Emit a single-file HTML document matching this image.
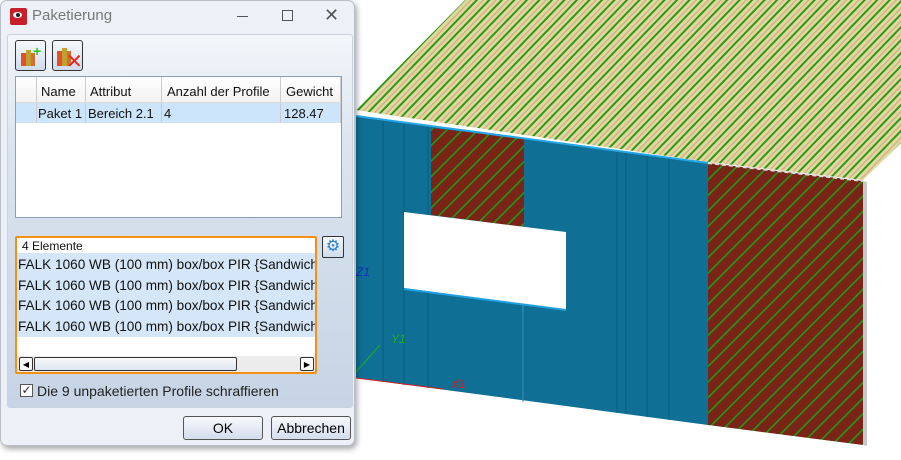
<!DOCTYPE html>
<html><head><meta charset="utf-8"><style>
body{margin:0;width:901px;height:460px;overflow:hidden;background:#fff;font-family:"Liberation Sans",sans-serif;position:relative}
.a{position:absolute}
.dlg{left:0;top:0;width:355px;height:446px;background:#edf1f7;border:1px solid #b9bfc8;border-radius:7px;box-shadow:2px 3px 6px rgba(0,0,0,.35);box-sizing:border-box;overflow:hidden}
.panel{left:6px;top:33px;width:344px;height:372px;border:1px solid #c9d3e0;border-radius:3px;background:linear-gradient(#f3f6fa 0,#dbe4ef 30%,#c7d4e5 100%)}
.tb{width:31px;height:31px;border:1px solid #333;border-radius:3px;background:linear-gradient(#f6f8fb,#cfdceb);box-sizing:border-box}
.t{font-size:13px;color:#111;white-space:nowrap}
.r{font-size:13.6px;color:#111;white-space:nowrap}
.btn{height:24px;border:1px solid #555;border-radius:3px;background:linear-gradient(#f7f9fc,#d3dded);box-sizing:border-box;font-size:14px;text-align:center;line-height:22px}
</style></head><body>
<svg class="a" style="left:0;top:0" width="901" height="460">
<defs>
<pattern id="rh" patternUnits="userSpaceOnUse" width="9" height="9" patternTransform="rotate(44)">
<rect width="9" height="9" fill="#e5d5a0"/><rect x="0" width="2" height="9" fill="#2a9a1a"/><rect x="5" width="1.5" height="9" fill="#c9b982"/></pattern>
<pattern id="wh" patternUnits="userSpaceOnUse" width="11" height="11" patternTransform="rotate(45)">
<rect width="11" height="11" fill="#7a2418"/><rect x="0" width="1.6" height="11" fill="#1f9a18"/></pattern>
</defs>
<polygon points="356,110 465,0 901,0 901,143 863,180 708,162" fill="url(#rh)"/>
<polygon points="356,116 708,163 708,425 356,378" fill="#0f6f95"/>
<g stroke="#0a5c80" stroke-width="1"><line x1="383" y1="120" x2="383" y2="382"/><line x1="404" y1="122" x2="404" y2="385"/><line x1="428" y1="126" x2="428" y2="388"/><line x1="617" y1="151" x2="617" y2="413"/><line x1="626" y1="152" x2="626" y2="414"/><line x1="647" y1="155" x2="647" y2="417"/><line x1="669" y1="158" x2="669" y2="420"/><line x1="523" y1="232" x2="523" y2="402" stroke="#3a90b8"/></g>
<polygon points="431,128 524,138 524,227 431,215" fill="url(#wh)"/>
<polygon points="708,163 863,181 863,445 708,425" fill="url(#wh)"/>
<polygon points="863,181 867,182 867,446 863,445" fill="#c8c8c8"/>
<polygon points="404,212 566,232 566,310 404,288" fill="#fff"/>
<line x1="404" y1="289" x2="566" y2="310" stroke="#1fa0e0" stroke-width="2"/>
<line x1="356" y1="116" x2="708" y2="163" stroke="#25a5e5" stroke-width="2"/>
<line x1="708" y1="163" x2="863" y2="181" stroke="#ddd" stroke-width="2" stroke-dasharray="4,3"/>
<line x1="356" y1="378" x2="443" y2="389" stroke="#d02020"/>
<line x1="356" y1="372" x2="380" y2="345" stroke="#20b020"/>
<text x="451" y="388" fill="#d02020" font-size="12" font-style="italic" font-family="Liberation Sans">X1</text>
<text x="391" y="343" fill="#20b020" font-size="12" font-style="italic" font-family="Liberation Sans">Y1</text>
<text x="356" y="276" fill="#1030c0" font-size="12" font-style="italic" font-family="Liberation Sans">Z1</text>
</svg>
<div class="a dlg">
<div class="a" style="left:9px;top:7px;width:17px;height:17px;background:#c8202a;border-radius:2px"><div class="a" style="left:3px;top:4px;width:9px;height:6px;background:#fff;border-radius:50%"></div><div class="a" style="left:6px;top:5px;width:4px;height:4px;background:#222;border-radius:50%"></div></div>
<div class="a" style="left:31px;top:6px;font-size:15px;color:#777">Paketierung</div>
<div class="a" style="left:236px;top:15px;width:11px;height:1px;background:#555"></div>
<div class="a" style="left:281px;top:9px;width:9px;height:9px;border:1px solid #555"></div>
<div class="a" style="left:323px;top:4px;font-size:18px;color:#555">✕</div>
<div class="a panel"></div>
<div class="a tb" style="left:14px;top:39px"><div class="a" style="left:5px;top:12px;width:5px;height:13px;background:#e0502a"></div><div class="a" style="left:10px;top:9px;width:5px;height:16px;background:#c0a030"></div><div class="a" style="left:15px;top:12px;width:4px;height:13px;background:#d07030"></div><div class="a" style="left:17px;top:2px;color:#2c2;font-weight:bold;font-size:14px">+</div></div>
<div class="a tb" style="left:51px;top:39px"><div class="a" style="left:4px;top:10px;width:5px;height:15px;background:#e0502a"></div><div class="a" style="left:9px;top:7px;width:5px;height:18px;background:#c0a030"></div><div class="a" style="left:14px;top:10px;width:4px;height:15px;background:#d07030"></div><div class="a" style="left:13px;top:8px;color:#e22;font-size:20px">✕</div></div>
<div class="a" style="left:14px;top:75px;width:327px;height:142px;background:#fff;border:1px solid #8a9fba;box-sizing:border-box">
<div class="a" style="left:0;top:0;width:325px;height:26px;background:linear-gradient(#fff,#f2f2f2)"></div>
<div class="a" style="left:0;top:26px;width:325px;height:20px;background:#cde5fb"></div>
<div class="a" style="left:20px;top:0;width:1px;height:46px;background:#ccc"></div>
<div class="a" style="left:69px;top:0;width:1px;height:46px;background:#ccc"></div>
<div class="a" style="left:145px;top:0;width:1px;height:46px;background:#ccc"></div>
<div class="a" style="left:264px;top:0;width:1px;height:46px;background:#ccc"></div>
<div class="a" style="left:324px;top:0;width:1px;height:46px;background:#ccc"></div>
<div class="a" style="left:0;top:25px;width:325px;height:1px;background:#ddd"></div>
<div class="a t" style="left:25px;top:7px">Name</div><div class="a t" style="left:74px;top:7px">Attribut</div><div class="a t" style="left:151px;top:7px">Anzahl der Profile</div><div class="a t" style="left:270px;top:7px">Gewicht</div>
<div class="a t" style="left:22px;top:29px">Paket 1</div><div class="a t" style="left:72px;top:29px">Bereich 2.1</div><div class="a t" style="left:148px;top:29px">4</div><div class="a t" style="left:268px;top:29px">128.47</div>
</div>
<div class="a" style="left:14px;top:235px;width:302px;height:138px;background:#fff;border:2px solid #f59010;border-radius:2px;box-sizing:border-box;overflow:hidden">
<div class="a" style="left:5px;top:1px;font-size:12px;color:#111">4 Elemente</div>
<div class="a" style="left:0;top:15px;width:300px;height:84px;background:#d4e6f8"></div>
<div class="a r" style="left:1px;top:19px">FALK 1060 WB (100 mm) box/box PIR {Sandwich</div>
<div class="a r" style="left:1px;top:40px">FALK 1060 WB (100 mm) box/box PIR {Sandwich</div>
<div class="a r" style="left:1px;top:60px">FALK 1060 WB (100 mm) box/box PIR {Sandwich</div>
<div class="a r" style="left:1px;top:81px">FALK 1060 WB (100 mm) box/box PIR {Sandwich</div>
<div class="a" style="left:0;top:118px;width:298px;height:16px;background:#ececec"></div>
<div class="a" style="left:2px;top:119px;width:14px;height:14px;border:1px solid #333;border-radius:2px;background:#fafafa;font-size:8px;line-height:14px;text-align:center;box-sizing:border-box">◀</div>
<div class="a" style="left:17px;top:119px;width:203px;height:14px;border:1px solid #333;border-radius:2px;background:linear-gradient(#f8f8f8,#dce6f2);box-sizing:border-box"></div>
<div class="a" style="left:283px;top:119px;width:14px;height:14px;border:1px solid #333;border-radius:2px;background:#fafafa;font-size:8px;line-height:14px;text-align:center;box-sizing:border-box">▶</div>
</div>
<div class="a" style="left:321px;top:235px;width:22px;height:22px;border:1px solid #333;border-radius:2px;background:linear-gradient(#f6f8fb,#cfdceb);box-sizing:border-box;color:#2a80d0;font-size:16px;line-height:20px;text-align:center">⚙</div>
<div class="a" style="left:19px;top:383px;width:13px;height:13px;border:1px solid #555;background:#fff;box-sizing:border-box;font-size:12px;line-height:11px;color:#223;text-align:center">✓</div>
<div class="a" style="left:36px;top:382px;font-size:14px;color:#222">Die 9 unpaketierten Profile schraffieren</div>
<div class="a btn" style="left:182px;top:415px;width:80px">OK</div>
<div class="a btn" style="left:270px;top:415px;width:80px">Abbrechen</div>
</div>
</body></html>
